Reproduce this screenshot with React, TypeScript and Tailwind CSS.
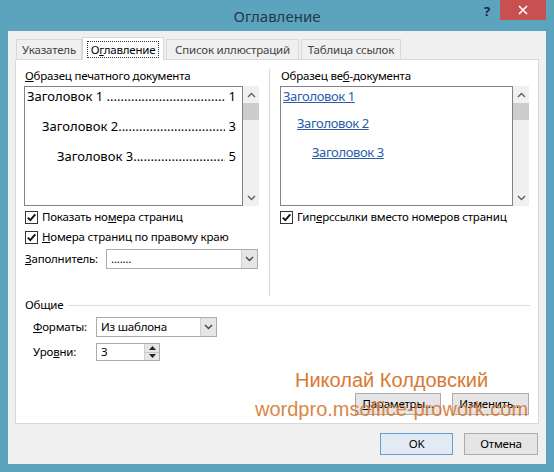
import React from "react";

function Chevron({ dir, color = "#606060" }: { dir: "up" | "down"; color?: string }) {
  return (
    <svg width="9" height="6" viewBox="0 0 9 6">
      {dir === "up" ? (
        <polyline points="1,5 4.5,1.5 8,5" fill="none" stroke={color} strokeWidth="1.4" />
      ) : (
        <polyline points="1,1 4.5,4.5 8,1" fill="none" stroke={color} strokeWidth="1.4" />
      )}
    </svg>
  );
}

function VScroll() {
  return (
    <div className="w-[16px] h-full bg-[#f0f0f0] flex flex-col shrink-0">
      <div className="h-[17px] flex items-center justify-center">
        <Chevron dir="up" />
      </div>
      <div className="h-[17px] bg-[#cdcdcd]" />
      <div className="flex-1" />
      <div className="h-[17px] flex items-center justify-center">
        <Chevron dir="down" />
      </div>
    </div>
  );
}

function CheckBox() {
  return (
    <div className="w-[13px] h-[13px] border border-[#333333] bg-white flex items-center justify-center shrink-0">
      <svg width="11" height="11" viewBox="0 0 11 11">
        <polyline points="1.8,5.6 4.3,8.2 9.3,2.3" fill="none" stroke="#111111" strokeWidth="1.9" />
      </svg>
    </div>
  );
}

function Combo({ value, width }: { value: string; width: string }) {
  return (
    <div className={`${width} h-[20px] border border-[#acacac] bg-white flex items-center`}>
      <span className="flex-1 pl-[4px] leading-[18px]">{value}</span>
      <div className="w-[16px] h-[18px] bg-[#e6e6e6] border-l border-[#d0d0d0] flex items-center justify-center">
        <Chevron dir="down" color="#444444" />
      </div>
    </div>
  );
}

function Btn({ children, def = false, w }: { children: React.ReactNode; def?: boolean; w: string }) {
  return (
    <div
      className={`${w} h-[22px] flex items-center justify-center border ${
        def ? "border-[#5f9edb] bg-[#e2ebf4]" : "border-[#acacac] bg-[#e5e5e5]"
      }`}
    >
      {children}
    </div>
  );
}

const DOTS = ".".repeat(120);

export default function App() {
  return (
    <div className="relative w-[554px] h-[472px] bg-[#5ca3bd] flex flex-col font-['Segoe_UI','Noto_Sans',sans-serif] text-[11.5px] tracking-[-0.2px] text-black overflow-hidden">
      {/* Title bar */}
      <div className="h-[31px] shrink-0 grid grid-cols-[1fr_auto_1fr]">
        <div />
        <div className="flex items-center text-[15px] tracking-normal text-[#203a49] pt-[2px]">Оглавление</div>
        <div className="flex justify-end items-start pr-[8px]">
          <div className="w-[26px] h-[20px] flex items-center justify-center text-[13px] font-bold text-[#15293a] mt-[2px]">
            ?
          </div>
          <div className="w-[46px] h-[20px] bg-[#c75050] flex items-center justify-center">
            <svg width="10" height="10" viewBox="0 0 10 10">
              <path d="M1 1 L9 9 M9 1 L1 9" stroke="#ffffff" strokeWidth="1.6" />
            </svg>
          </div>
        </div>
      </div>

      {/* Client area */}
      <div className="mx-[8px] mb-[8px] flex-1 bg-[#f0f0f0] flex flex-col pt-[6px] px-[7px]">
        {/* Tabs */}
        <div className="flex items-end h-[23px] pl-[1px]">
          <div className="w-[66px] h-[20px] mb-[1px] border border-[#d9d9d9] border-b-0 bg-[#f0f0f0] flex items-center justify-center text-[#444444]">
            Указатель
          </div>
          <div className="relative z-10 w-[82px] h-[23px] border border-[#d9d9d9] border-b-0 bg-white flex items-center justify-center">
            <span className="border border-dotted border-[#333333] px-[3px] leading-[15px]">
              О<span className="underline">г</span>лавление
            </span>
          </div>
          <div className="w-[133px] h-[20px] mb-[1px] ml-[2px] border border-[#d9d9d9] border-b-0 bg-[#f0f0f0] flex items-center justify-center text-[#444444]">
            Список иллюстраций
          </div>
          <div className="w-[100px] h-[20px] mb-[1px] ml-[2px] border border-[#d9d9d9] border-b-0 bg-[#f0f0f0] flex items-center justify-center text-[#444444]">
            Таблица ссылок
          </div>
        </div>

        {/* Panel */}
        <div className="relative -mt-[1px] bg-white border border-[#d9d9d9] h-[365px] flex flex-col">
          <div className="flex h-[236px] pt-[9px]">
            {/* Left column */}
            <div className="w-[235px] ml-[8px] flex flex-col">
              <div className="h-[14px] leading-[14px] pl-[1px]">
                <span className="underline">О</span>бразец печатного документа
              </div>
              <div className="mt-[3px] h-[120px] flex">
                <div className="flex-1 min-w-0 overflow-hidden border border-[#828282] bg-white flex flex-col gap-[12px] text-[13px] tracking-normal pr-[6px]">
                  <div className="h-[18px] leading-[18px] flex pl-[2px]">
                    <span className="whitespace-nowrap shrink-0">Заголовок 1&nbsp;</span>
                    <span className="flex-1 min-w-0 overflow-hidden whitespace-nowrap">{DOTS}</span>
                    <span className="shrink-0">&nbsp;1</span>
                  </div>
                  <div className="h-[18px] leading-[18px] flex pl-[17px]">
                    <span className="whitespace-nowrap shrink-0">Заголовок 2</span>
                    <span className="flex-1 min-w-0 overflow-hidden whitespace-nowrap">{DOTS}</span>
                    <span className="shrink-0">&nbsp;3</span>
                  </div>
                  <div className="h-[18px] leading-[18px] flex pl-[32px]">
                    <span className="whitespace-nowrap shrink-0">Заголовок 3</span>
                    <span className="flex-1 min-w-0 overflow-hidden whitespace-nowrap">{DOTS}</span>
                    <span className="shrink-0">&nbsp;5</span>
                  </div>
                </div>
                <VScroll />
              </div>
              <div className="mt-[3px] h-[16px] flex items-center gap-[4px] pl-[1px]">
                <CheckBox />
                <span>
                  Показать но<span className="underline">м</span>ера страниц
                </span>
              </div>
              <div className="mt-[4px] h-[16px] flex items-center gap-[4px] pl-[1px]">
                <CheckBox />
                <span>
                  <span className="underline">Н</span>омера страниц по правому краю
                </span>
              </div>
              <div className="mt-[4px] h-[20px] flex items-center pl-[1px]">
                <span className="w-[81px]">
                  <span className="underline">З</span>аполнитель:
                </span>
                <Combo value="......." width="w-[152px]" />
              </div>
            </div>

            {/* Divider */}
            <div className="ml-[10px] w-px bg-[#d7d7d7]" />

            {/* Right column */}
            <div className="ml-[10px] w-[249px] flex flex-col">
              <div className="h-[14px] leading-[14px] pl-[1px]">
                Образец ве<span className="underline">б</span>-документа
              </div>
              <div className="mt-[3px] h-[120px] flex">
                <div className="flex-1 min-w-0 border border-[#828282] bg-white flex flex-col text-[13px] tracking-[-0.4px] text-[#2a5caa]">
                  <div className="h-[18px] leading-[18px] pl-[2px]">
                    <span className="underline">Заголовок 1</span>
                  </div>
                  <div className="mt-[9px] h-[18px] leading-[18px] pl-[16px]">
                    <span className="underline">Заголовок 2</span>
                  </div>
                  <div className="mt-[11px] h-[18px] leading-[18px] pl-[31px]">
                    <span className="underline">Заголовок 3</span>
                  </div>
                </div>
                <VScroll />
              </div>
              <div className="mt-[3px] h-[16px] flex items-center gap-[4px]">
                <CheckBox />
                <span>
                  Гип<span className="underline">е</span>рссылки вместо номеров страниц
                </span>
              </div>
            </div>
          </div>

          {/* Общие */}
          <div className="mt-[2px] h-[14px] flex items-center">
            <span className="ml-[9px] leading-[14px]">Общие</span>
            <div className="flex-1 h-px bg-[#dcdcdc] ml-[5px] mr-[8px]" />
          </div>
          <div className="mt-[5px] h-[20px] flex items-center">
            <span className="ml-[17px] w-[63px]">
              <span className="underline">Ф</span>орматы:
            </span>
            <Combo value="Из шаблона" width="w-[121px]" />
          </div>
          <div className="mt-[6px] h-[18px] flex items-center">
            <span className="ml-[17px] w-[63px]">
              Уро<span className="underline">в</span>ни:
            </span>
            <div className="w-[64px] h-[18px] border border-[#acacac] bg-white flex">
              <span className="flex-1 pl-[4px] leading-[16px]">3</span>
              <div className="w-[15px] h-[16px] flex flex-col border-l border-[#d0d0d0]">
                <div className="flex-1 bg-[#e6e6e6] border-b border-[#c8c8c8] flex items-center justify-center">
                  <svg width="7" height="4" viewBox="0 0 7 4">
                    <polygon points="0,4 3.5,0 7,4" fill="#222222" />
                  </svg>
                </div>
                <div className="flex-1 bg-[#e6e6e6] flex items-center justify-center">
                  <svg width="7" height="4" viewBox="0 0 7 4">
                    <polygon points="0,0 3.5,4 7,0" fill="#222222" />
                  </svg>
                </div>
              </div>
            </div>
          </div>
          <div className="mt-auto pb-[8px] pr-[9px] flex justify-end gap-[11px]">
            <Btn w="w-[86px]">
              <span>
                <span className="underline">П</span>араметры...
              </span>
            </Btn>
            <Btn w="w-[77px]">
              <span>Изменить...</span>
            </Btn>
          </div>
        </div>

        {/* Bottom buttons */}
        <div className="mt-[9px] flex justify-end gap-[11px] pr-[1px]">
          <Btn def w="w-[73px]">
            OK
          </Btn>
          <Btn w="w-[74px]">Отмена</Btn>
        </div>
      </div>

      {/* Watermark overlay */}
      <div className="absolute left-[295px] top-[368px] text-[20px] tracking-normal leading-[24px] text-[#d77a35] font-['Liberation_Sans',Arial,sans-serif] whitespace-nowrap pointer-events-none">
        Николай Колдовский
      </div>
      <div className="absolute left-[255px] top-[397px] text-[20px] tracking-normal leading-[24px] text-[#d77a35] font-['Liberation_Sans',Arial,sans-serif] whitespace-nowrap pointer-events-none opacity-90">
        wordpro.msoffice-prowork.com
      </div>
    </div>
  );
}
